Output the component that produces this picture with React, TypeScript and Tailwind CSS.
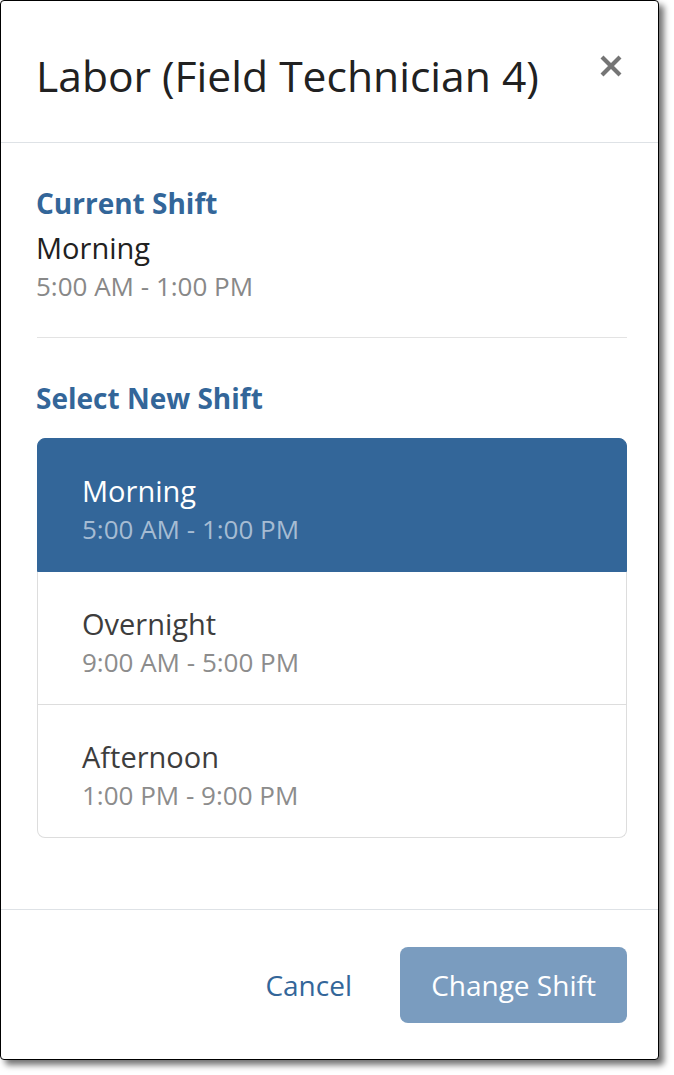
import React from "react";

const shifts = [
  { name: "Morning", time: "5:00 AM - 1:00 PM", active: true },
  { name: "Overnight", time: "9:00 AM - 5:00 PM", active: false },
  { name: "Afternoon", time: "1:00 PM - 9:00 PM", active: false },
];

export default function App() {
  return (
    <div
      className="w-[674px] h-[1075px] bg-white"
      style={{ fontFamily: '"Open Sans", "Noto Sans", sans-serif' }}
    >
      <div className="w-[659px] h-[1060px] border border-black rounded-[4px] bg-white shadow-[5px_5px_6px_rgba(0,0,0,0.55)] flex flex-col">
        {/* Header */}
        <div className="h-[142px] shrink-0 border-b border-[#dee2e6] flex items-start justify-between pl-[35px] pr-[35px]">
          <h1 className="pt-[46px] text-[42.6px] leading-[56px] text-[#212121] font-normal">
            Labor (Field Technician 4)
          </h1>
          <button className="mt-[53px] w-[24px] h-[24px] flex items-center justify-center text-[#757575]">
            <svg width="24" height="24" viewBox="0 0 24 24">
              <path
                d="M3 3 L21 21 M21 3 L3 21"
                stroke="currentColor"
                strokeWidth="4.2"
                strokeLinecap="butt"
              />
            </svg>
          </button>
        </div>

        {/* Body */}
        <div className="flex-1 pl-[35px] pr-[31px] pt-[40px]">
          <h2 className="text-[28px] leading-[40px] font-bold text-[#336699]">Current Shift</h2>
          <div className="mt-[6px] text-[29px] leading-[38px] text-[#212121]">Morning</div>
          <div className="text-[26px] leading-[38px] text-[#888888]">5:00 AM - 1:00 PM</div>
          <div className="mt-[32px] ml-px h-px bg-[#e3e3e3]" />
          <h2 className="mt-[40px] text-[28px] leading-[40px] font-bold text-[#336699]">Select New Shift</h2>
          <div className="mt-[20px] ml-px flex flex-col">
            {shifts.map((s, i) => (
              <div
                key={s.name}
                className={
                  (i === 0 ? "border rounded-t-[8px] " : "border-x border-b ") +
                  (i === shifts.length - 1 ? "rounded-b-[8px] " : "") +
                  (s.active
                    ? "bg-[#336699] border-[#336699] "
                    : "bg-white border-[#dddddd] ") +
                  "pl-[44px] pt-[33px] pb-[23px]"
                }
              >
                <div
                  className={
                    "text-[29px] leading-[38px] " +
                    (s.active ? "text-white" : "text-[#3d3d3d]")
                  }
                >
                  {s.name}
                </div>
                <div
                  className={
                    "text-[26px] leading-[38px] " +
                    (s.active ? "text-[#a6bcd3]" : "text-[#8c8c8c]")
                  }
                >
                  {s.time}
                </div>
              </div>
            ))}
          </div>
        </div>

        {/* Footer */}
        <div className="shrink-0 border-t border-[#dee2e6] h-[150px] flex items-center justify-end gap-[48px] pr-[31px]">
          <button className="text-[28px] leading-[40px] text-[#336699]">Cancel</button>
          <button className="w-[227px] h-[76px] rounded-[8px] bg-[#7a9cbf] text-white text-[28px] leading-[40px]">
            Change Shift
          </button>
        </div>
      </div>
    </div>
  );
}
